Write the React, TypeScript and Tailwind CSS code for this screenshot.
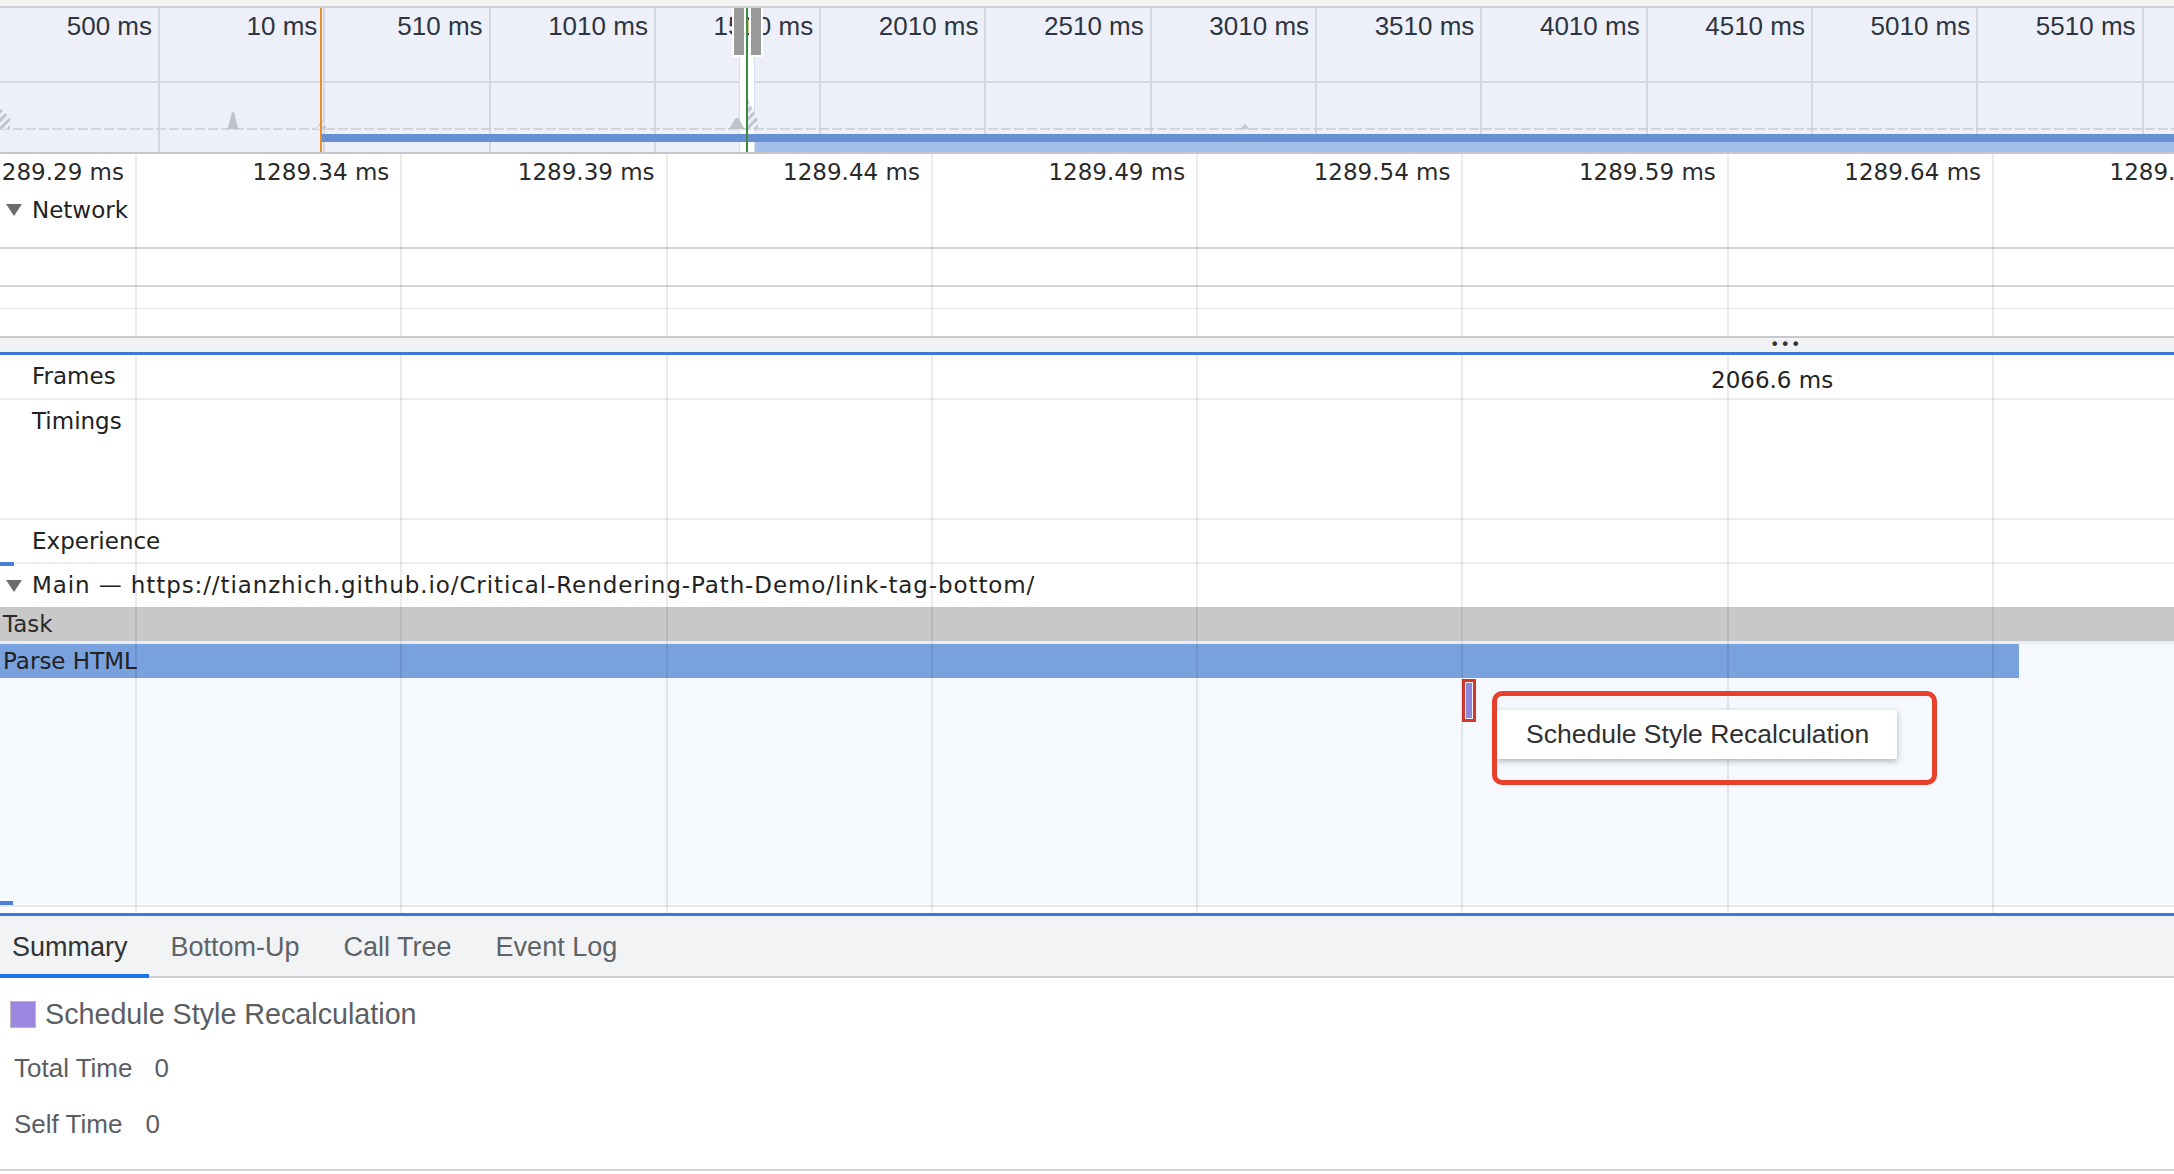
import React from "react";

const OV_TICKS = [
  "500 ms",
  "10 ms",
  "510 ms",
  "1010 ms",
  "1510 ms",
  "2010 ms",
  "2510 ms",
  "3010 ms",
  "3510 ms",
  "4010 ms",
  "4510 ms",
  "5010 ms",
  "5510 ms",
];

const RULER_TICKS = [
  "1289.29 ms",
  "1289.34 ms",
  "1289.39 ms",
  "1289.44 ms",
  "1289.49 ms",
  "1289.54 ms",
  "1289.59 ms",
  "1289.64 ms",
  "1289.69 ms",
];

const flameFont = { fontFamily: '"DejaVu Sans", "Liberation Sans", sans-serif' };
const uiFont = { fontFamily: '"Liberation Sans", Arial, sans-serif' };

function Triangle() {
  return (
    <svg width="18" height="14" viewBox="0 0 18 14" className="shrink-0">
      <path d="M1 1 H17 L9 13 Z" fill="#6b6b6b" />
    </svg>
  );
}

// vertical grid lines drawn over the flame chart rows
function GridOverlay() {
  return (
    <div className="pointer-events-none absolute inset-0 flex overflow-hidden">
      <div className="h-full w-[137px] shrink-0 border-r-2 border-[rgba(0,0,0,0.08)]" />
      {RULER_TICKS.slice(1).map((t) => (
        <div
          key={t}
          className="h-full w-[265.3px] shrink-0 border-r-2 border-[rgba(0,0,0,0.08)]"
        />
      ))}
    </div>
  );
}

function Overview() {
  return (
    <div className="relative h-[144px] overflow-hidden bg-[#edf0f8]" style={uiFont}>
      <div className="flex h-full">
        {OV_TICKS.map((t, i) => (
          <div
            key={t}
            className={`flex h-full shrink-0 justify-end border-r-2 border-[#d5d8e0] pr-[6px] pt-[5px] ${
              i === 0 ? "w-[160px]" : "w-[165.3px]"
            }`}
          >
            <span className="text-[26px] leading-[26px] whitespace-nowrap text-[#2d3540]">
              {t}
            </span>
          </div>
        ))}
      </div>
      <svg
        className="pointer-events-none absolute left-0 top-0"
        width="2174"
        height="144"
        viewBox="0 0 2174 144"
      >
        <defs>
          <pattern id="hatch" width="6" height="6" patternUnits="userSpaceOnUse" patternTransform="rotate(45)">
            <rect width="6" height="6" fill="#edf0f8" />
            <rect width="3" height="6" fill="#c3c6cd" />
          </pattern>
        </defs>
        <line x1="0" y1="74" x2="2174" y2="74" stroke="#d5d8e0" strokeWidth="2" />
        <rect x="739" y="40" width="16" height="104" fill="#ffffff" opacity="0.9" />
        <line x1="739.5" y1="40" x2="739.5" y2="144" stroke="#d6e0f2" strokeWidth="1" />
        <line x1="754.5" y1="40" x2="754.5" y2="144" stroke="#d6e0f2" strokeWidth="1" />
        <line x1="0" y1="121" x2="2174" y2="121" stroke="#c9ccd3" strokeWidth="1.5" strokeDasharray="10 3" />
        <path d="M0 121 V100 L10 110 V121 Z" fill="url(#hatch)" />
        <path d="M226 121 C230 121 230 104 233 104 C236 104 236 121 240 121 Z" fill="#bec2c9" />
        <path d="M316 121 L322 112 L327 121 Z" fill="url(#hatch)" />
        <path d="M727 121 C732 121 733 110 737 110 C741 110 742 121 746 121 Z" fill="#bec2c9" />
        <path d="M748 121 V92 L758 112 V121 Z" fill="url(#hatch)" />
        <path d="M1240 121 L1245 116 L1250 121 Z" fill="#c7cad1" />
        <rect x="322" y="126" width="1852" height="8" fill="#6690d2" />
        <rect x="755" y="134" width="1419" height="10" fill="#a2bfec" />
        <line x1="321" y1="0" x2="321" y2="144" stroke="#e3912c" strokeWidth="2" />
        <line x1="747" y1="0" x2="747" y2="144" stroke="#3d8a43" strokeWidth="2" />
        <rect x="733" y="-2" width="12" height="50" fill="#9a9a9a" stroke="#ffffff" strokeWidth="2" />
        <rect x="750" y="-2" width="12" height="50" fill="#9a9a9a" stroke="#ffffff" strokeWidth="2" />
      </svg>
    </div>
  );
}

function NetworkSection() {
  return (
    <div className="relative bg-white" style={flameFont}>
      <div className="flex h-[36px] overflow-hidden">
        {RULER_TICKS.map((t, i) => (
          <div
            key={t}
            className={`flex h-full shrink-0 items-center justify-end overflow-hidden pr-[13px] ${
              i === 0 ? "w-[137px]" : "w-[265.3px]"
            }`}
          >
            <span className="text-[23px] leading-[24px] whitespace-nowrap text-[#2a2a2a]">
              {t}
            </span>
          </div>
        ))}
      </div>
      <div className="flex h-[59px] items-start gap-[9px] border-b-2 border-[#d6d6d6] pl-[5px] pt-[8px]">
        <div className="pt-[5px]">
          <Triangle />
        </div>
        <span className="text-[23px] leading-[24px] text-[#222]">Network</span>
      </div>
      <div className="h-[38px] border-b-2 border-[#d6d6d6]" />
      <div className="h-[22px] border-b border-[#ebebeb]" />
      <div className="h-[27px]" />
      <GridOverlay />
    </div>
  );
}

function MainSection() {
  return (
    <div className="relative" style={flameFont}>
      <div className="relative flex h-[45px] items-center border-b-2 border-[#ececec] bg-white pl-[32px]">
        <span className="text-[23px] text-[#222]">Frames</span>
        <span className="absolute left-[1711px] top-[8px] text-[23px] text-[#222]">2066.6 ms</span>
      </div>
      <div className="h-[120px] border-b-2 border-[#ececec] bg-white pl-[32px] pt-[8px]">
        <span className="text-[23px] leading-[26px] text-[#222]">Timings</span>
      </div>
      <div className="flex h-[44px] items-center border-b-2 border-[#ececec] bg-white pl-[32px]">
        <span className="text-[23px] text-[#222]">Experience</span>
      </div>
      <div className="flex h-[43px] items-center gap-[9px] bg-white pl-[5px]">
        <Triangle />
        <span className="text-[23px] tracking-[0.9px] whitespace-nowrap text-[#222]">
          Main — https://tianzhich.github.io/Critical-Rendering-Path-Demo/link-tag-bottom/
        </span>
      </div>
      <div className="flex h-[34px] items-center bg-[#c8c8c8] pl-[3px]">
        <span className="text-[23px] text-[#2a2a2a]">Task</span>
      </div>
      <div className="h-[3px] bg-[#e9edf3]" />
      <div className="flex h-[34px] bg-[#f5f8fd]">
        <div className="flex h-full w-[2019px] items-center bg-[#79a1dd] pl-[3px]">
          <span className="text-[23px] text-[#222]">Parse HTML</span>
        </div>
      </div>
      <div className="relative h-[227px] bg-[#f5f8fd]">
        <div className="absolute left-[1462px] top-[1px] flex h-[43px] w-[14px] border-[3px] border-[#d2372b] bg-[#f0f0fa] p-px">
          <div className="h-full w-full bg-[#8f86da]" />
        </div>
      </div>
      <div className="h-[2px] bg-[#e6e8eb]" />
      <div className="h-[6px] bg-white" />
      <GridOverlay />
      <div className="absolute left-0 top-[207px] h-[4px] w-[14px] bg-[#4a80d8]" />
      <div className="absolute left-0 top-[546px] h-[4px] w-[13px] bg-[#4a80d8]" />
      {/* tooltip with red annotation */}
      <div className="absolute left-[1497px] top-[355px] flex h-[49px] w-[400px] items-center bg-white pl-[29px] shadow-[0_2px_6px_rgba(0,0,0,0.3)]" style={uiFont}>
        <span className="text-[26.5px] text-[#303030]">Schedule Style Recalculation</span>
      </div>
      <div className="absolute left-[1492px] top-[336px] h-[94px] w-[445px] rounded-[10px] border-[5px] border-[#e8402a]" />
    </div>
  );
}

function Tabs() {
  const tabs = ["Summary", "Bottom-Up", "Call Tree", "Event Log"];
  return (
    <div className="flex h-[62px] border-b-2 border-[#cbcdd1] bg-[#f1f3f4]" style={uiFont}>
      {tabs.map((t, i) => (
        <div
          key={t}
          className={`flex h-[62px] items-center text-[27px] ${
            i === 0
              ? "border-b-4 border-[#1a73e8] pl-[12px] pr-[21px] pt-[4px] text-[#333]"
              : "px-[22px] text-[#5f6368]"
          }`}
        >
          {t}
        </div>
      ))}
    </div>
  );
}

function Summary() {
  return (
    <div className="h-[193px] border-b-2 border-[#d3d3d3] bg-white" style={uiFont}>
      <div className="flex h-[72px] items-center gap-[9px] pl-[10px] pt-[1px]">
        <div className="h-[27px] w-[26px] border border-[#b9b9b9] bg-[#9b87e0]" />
        <span className="text-[28.7px] text-[#5b5e63]">Schedule Style Recalculation</span>
      </div>
      <div className="flex h-[37px] items-center gap-[22px] pl-[14px]">
        <span className="text-[26px] text-[#5b5e63]">Total Time</span>
        <span className="text-[26px] text-[#5b5e63]">0</span>
      </div>
      <div className="h-[19px]" />
      <div className="flex h-[37px] items-center gap-[23px] pl-[14px]">
        <span className="text-[26px] text-[#5b5e63]">Self Time</span>
        <span className="text-[26px] text-[#5b5e63]">0</span>
      </div>
    </div>
  );
}

export default function App() {
  return (
    <div className="flex h-[1174px] w-[2174px] flex-col overflow-hidden bg-white">
      <div className="h-[8px] shrink-0 border-b-2 border-[#cfd0d3] bg-[#f3f3f3]" />
      <Overview />
      <div className="h-[2px] shrink-0 bg-[#c6c7cb]" />
      <NetworkSection />
      <div className="flex h-[16px] shrink-0 items-center border-t-2 border-[#c9c9c9] bg-[#f1f2f4] pl-[1770px]">
        <span className="text-[16px] leading-[10px] tracking-[1px] text-[#333]" style={flameFont}>
          •••
        </span>
      </div>
      <div className="h-[3px] shrink-0 bg-[#3d78dc]" />
      <MainSection />
      <div className="h-[3px] shrink-0 bg-[#3d78dc]" />
      <Tabs />
      <Summary />
    </div>
  );
}
